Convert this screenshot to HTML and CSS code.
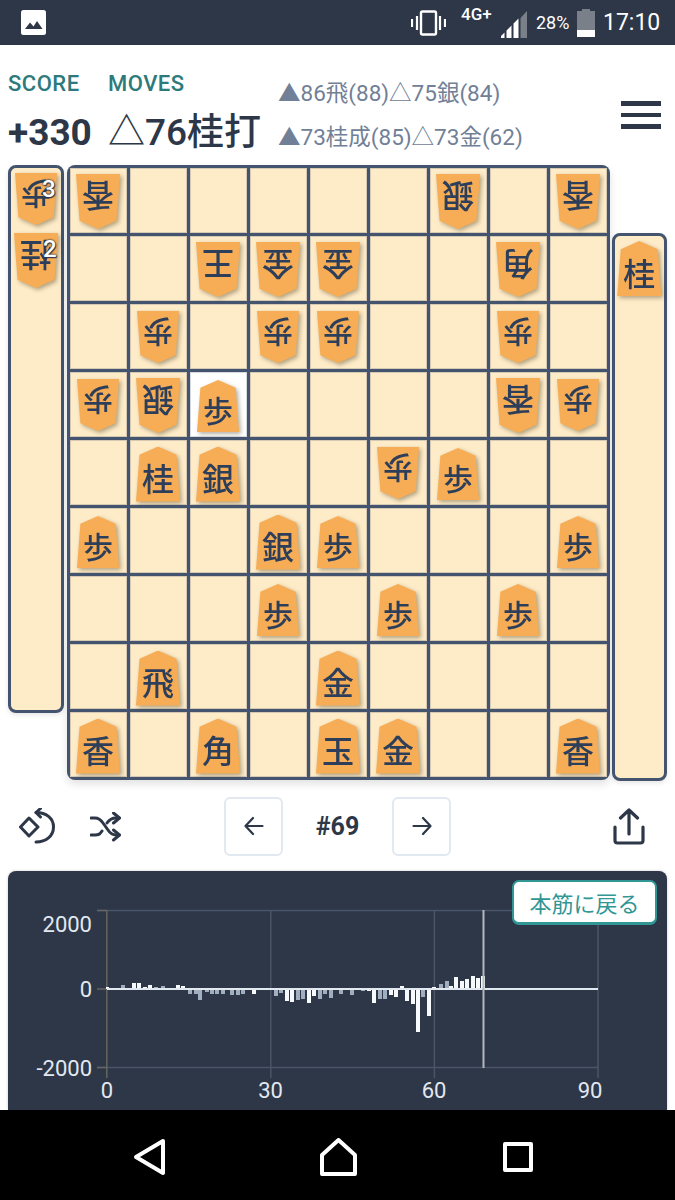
FILE: index.html
```html
<!DOCTYPE html>
<html lang="ja">
<head>
<meta charset="utf-8">
<title>Shogi</title>
<link rel="stylesheet" href="styles.css">
</head>
<body>
<div class="screen">
  <div class="status">
    <svg class="st-img" width="25" height="25" viewBox="0 0 25 25"><rect width="25" height="25" rx="2.5" fill="#fff"/><path d="M4 19 9 12.5l3.5 4L16 11l5.5 8z" fill="#2d3748"/></svg>
    <svg class="st-vib" width="35" height="26" viewBox="0 0 35 26"><rect x="10" y="1.5" width="15" height="23" rx="1.5" fill="none" stroke="#fff" stroke-width="2.4"/><path d="M6 6v14M1 9v8M29 6v14M34 9v8" stroke="#fff" stroke-width="2.2"/></svg>
    <span class="st-net">4G+</span>
    <svg class="st-sig" width="26" height="27" viewBox="0 0 26 27"><path d="M19.500 7 26 0V27H19.500z" fill="#7a808a"/><path d="M0 27V25L3.500 21.500V27zM5.500 27V19.500L10.500 14.500V27zM12.500 27V12.500L17.500 7.500V27z" fill="#fff"/></svg>
    <span class="st-pct">28%</span>
    <svg class="st-bat" width="18" height="28" viewBox="0 0 18 28"><path d="M5 0h8v2h5v26H0V2h5z" fill="#7a808a"/><rect y="21" width="18" height="7" fill="#fff"/></svg>
    <span class="st-time">17:10</span>
  </div>

  <header class="head">
    <div class="summary">
      <span class="label">SCORE</span>
      <span class="label">MOVES</span>
      <span class="score">+330</span>
      <span class="move">△76桂打</span>
    </div>
    <div class="lines">
      <div class="line">▲86飛(88)△75銀(84)</div>
      <div class="line">▲73桂成(85)△73金(62)</div>
    </div>
    <div class="burger"><i></i><i></i><i></i></div>
  </header>

  <div class="play">
    <div class="hand">
      <div class="held"><div class="piece"><span class="face small flip">歩</span></div><span class="count">3</span></div>
      <div class="held"><div class="piece"><span class="face flip">桂</span></div><span class="count">2</span></div>
    </div>
    <div class="board">
      <div class="cell"><div class="piece"><span class="face flip">香</span></div></div>
      <div class="cell"></div>
      <div class="cell"></div>
      <div class="cell"></div>
      <div class="cell"></div>
      <div class="cell"></div>
      <div class="cell"><div class="piece"><span class="face flip">銀</span></div></div>
      <div class="cell"></div>
      <div class="cell"><div class="piece"><span class="face flip">香</span></div></div>

      <div class="cell"></div>
      <div class="cell"></div>
      <div class="cell"><div class="piece"><span class="face flip">王</span></div></div>
      <div class="cell"><div class="piece"><span class="face flip">金</span></div></div>
      <div class="cell"><div class="piece"><span class="face flip">金</span></div></div>
      <div class="cell"></div>
      <div class="cell"></div>
      <div class="cell"><div class="piece"><span class="face flip">角</span></div></div>
      <div class="cell"></div>

      <div class="cell"></div>
      <div class="cell"><div class="piece"><span class="face small flip">歩</span></div></div>
      <div class="cell"></div>
      <div class="cell"><div class="piece"><span class="face small flip">歩</span></div></div>
      <div class="cell"><div class="piece"><span class="face small flip">歩</span></div></div>
      <div class="cell"></div>
      <div class="cell"></div>
      <div class="cell"><div class="piece"><span class="face small flip">歩</span></div></div>
      <div class="cell"></div>

      <div class="cell"><div class="piece"><span class="face small flip">歩</span></div></div>
      <div class="cell"><div class="piece"><span class="face flip">銀</span></div></div>
      <div class="cell last"><div class="piece"><span class="face small">歩</span></div></div>
      <div class="cell"></div>
      <div class="cell"></div>
      <div class="cell"></div>
      <div class="cell"></div>
      <div class="cell"><div class="piece"><span class="face flip">香</span></div></div>
      <div class="cell"><div class="piece"><span class="face small flip">歩</span></div></div>

      <div class="cell"></div>
      <div class="cell"><div class="piece"><span class="face">桂</span></div></div>
      <div class="cell"><div class="piece"><span class="face">銀</span></div></div>
      <div class="cell"></div>
      <div class="cell"></div>
      <div class="cell"><div class="piece"><span class="face small flip">歩</span></div></div>
      <div class="cell"><div class="piece"><span class="face small">歩</span></div></div>
      <div class="cell"></div>
      <div class="cell"></div>

      <div class="cell"><div class="piece"><span class="face small">歩</span></div></div>
      <div class="cell"></div>
      <div class="cell"></div>
      <div class="cell"><div class="piece"><span class="face">銀</span></div></div>
      <div class="cell"><div class="piece"><span class="face small">歩</span></div></div>
      <div class="cell"></div>
      <div class="cell"></div>
      <div class="cell"></div>
      <div class="cell"><div class="piece"><span class="face small">歩</span></div></div>

      <div class="cell"></div>
      <div class="cell"></div>
      <div class="cell"></div>
      <div class="cell"><div class="piece"><span class="face small">歩</span></div></div>
      <div class="cell"></div>
      <div class="cell"><div class="piece"><span class="face small">歩</span></div></div>
      <div class="cell"></div>
      <div class="cell"><div class="piece"><span class="face small">歩</span></div></div>
      <div class="cell"></div>

      <div class="cell"></div>
      <div class="cell"><div class="piece"><span class="face">飛</span></div></div>
      <div class="cell"></div>
      <div class="cell"></div>
      <div class="cell"><div class="piece"><span class="face">金</span></div></div>
      <div class="cell"></div>
      <div class="cell"></div>
      <div class="cell"></div>
      <div class="cell"></div>

      <div class="cell"><div class="piece"><span class="face">香</span></div></div>
      <div class="cell"></div>
      <div class="cell"><div class="piece"><span class="face">角</span></div></div>
      <div class="cell"></div>
      <div class="cell"><div class="piece"><span class="face">玉</span></div></div>
      <div class="cell"><div class="piece"><span class="face">金</span></div></div>
      <div class="cell"></div>
      <div class="cell"></div>
      <div class="cell"><div class="piece"><span class="face">香</span></div></div>
    </div>
    <div class="hand hand-right">
      <div class="held"><div class="piece"><span class="face">桂</span></div></div>
    </div>
  </div>

  <div class="controls">
    <svg class="ic-rotate" width="36" height="36" viewBox="0 0 36 36" fill="none" stroke="#2d3748" stroke-width="3" stroke-linecap="round" stroke-linejoin="round"><path d="M10 10 19 19 10 28 1.500 19z"/><path d="M17 4.500C27 4.500 34.500 10 34.500 19S27 34 17 34"/><path d="M21.500 0.500 17 4.500 21.500 9"/></svg>
    <svg class="ic-shuffle" width="31" height="30" viewBox="0 0 31 30" fill="none" stroke="#2d3748" stroke-width="3" stroke-linecap="round" stroke-linejoin="round"><path d="M1 6h4c4 0 6 2 8 5l5 7c2 3 4 5 8 5h3"/><path d="M1 23h4c4 0 5-1 7-4M17 11c2-3 4-5 9-5h3"/><path d="M23.500 1l6 5-6 5M23.500 18l6 5-6 5"/></svg>
    <button class="step step-prev"><svg width="20" height="20" viewBox="0 0 20 20" fill="none" stroke="#2d3748" stroke-width="2.200" stroke-linecap="round" stroke-linejoin="round"><path d="M18.500 10H1.500M9 2 1.500 10 9 18"/></svg></button>
    <span class="ply">#69</span>
    <button class="step"><svg width="20" height="20" viewBox="0 0 20 20" fill="none" stroke="#2d3748" stroke-width="2.200" stroke-linecap="round" stroke-linejoin="round"><path d="M1.500 10H18.500M11 2 18.500 10 11 18"/></svg></button>
    <svg class="ic-share" width="32" height="37" viewBox="0 0 32 37" fill="none" stroke="#2d3748" stroke-width="3.200" stroke-linecap="round" stroke-linejoin="round"><path d="M16 2V26M7.500 10 16 2 24.500 10"/><path d="M2 19V32.500A2.500 2.500 0 0 0 4.500 35H27.500A2.500 2.500 0 0 0 30 32.500V19"/></svg>
  </div>

  <section class="chart">
    <svg class="plot" width="659" height="239" viewBox="8 871 659 239">
      <g class="grid">
        <path d="M97 910.500H598M97 1067.500H598M270.800 910V1078M434.400 910V1078M598 910V1078"/>
      </g>
      <path class="axis" d="M106.800 910V1078M97 910.500H106.800M97 989H106.800M97 1067.500H106.800"/>
      <g class="gray">
        <rect x="121" y="985" width="4" height="4"/><rect x="154" y="987" width="4" height="2"/><rect x="161" y="986" width="4" height="3"/>
        <rect x="172" y="988" width="4" height="1"/><rect x="188" y="989" width="4" height="5"/><rect x="194" y="989" width="4" height="5"/>
        <rect x="198" y="989" width="4" height="11"/><rect x="205" y="989" width="4" height="3"/><rect x="210" y="989" width="4" height="5"/>
        <rect x="215" y="989" width="4" height="5"/><rect x="221" y="989" width="4" height="5"/><rect x="230" y="989" width="4" height="6"/>
        <rect x="236" y="989" width="4" height="6"/><rect x="241" y="989" width="4" height="5"/><rect x="258" y="989" width="4" height="1"/>
        <rect x="274" y="989" width="4" height="7"/><rect x="279" y="989" width="4" height="4"/><rect x="296" y="989" width="4" height="11"/>
        <rect x="301" y="989" width="4" height="10"/><rect x="318" y="989" width="4" height="10"/><rect x="323" y="989" width="4" height="5"/>
        <rect x="329" y="989" width="4" height="9"/><rect x="339" y="989" width="4" height="5"/><rect x="350" y="989" width="4" height="6"/>
        <rect x="361" y="989" width="4" height="2"/><rect x="378" y="989" width="4" height="10"/><rect x="383" y="989" width="4" height="10"/>
        <rect x="421" y="989" width="4" height="8"/><rect x="439" y="984" width="4" height="5"/><rect x="445" y="981" width="4" height="8"/>
      </g>
      <g class="white">
        <rect x="106" y="987" width="3" height="2"/><rect x="132" y="983" width="4" height="6"/>
        <rect x="137" y="983" width="4" height="6"/><rect x="143" y="987" width="4" height="2"/><rect x="148" y="985" width="4" height="4"/>
        <rect x="176" y="985" width="4" height="4"/><rect x="181" y="986" width="4" height="3"/><rect x="252" y="989" width="4" height="5"/>
        <rect x="285" y="989" width="4" height="12"/><rect x="290" y="989" width="4" height="13"/><rect x="307" y="989" width="4" height="14"/>
        <rect x="312" y="989" width="4" height="7"/><rect x="367" y="989" width="4" height="2"/><rect x="372" y="989" width="4" height="14"/>
        <rect x="389" y="989" width="4" height="6"/><rect x="394" y="989" width="4" height="8"/><rect x="400" y="986" width="4" height="3"/>
        <rect x="405" y="989" width="4" height="12"/><rect x="411" y="989" width="4" height="15"/><rect x="416" y="989" width="4" height="43"/>
        <rect x="427" y="989" width="4" height="27"/><rect x="432" y="987" width="4" height="2"/><rect x="449" y="986" width="4" height="3"/>
        <rect x="454" y="977" width="4" height="12"/><rect x="460" y="981" width="4" height="8"/><rect x="465" y="979" width="4" height="10"/>
        <rect x="471" y="976" width="4" height="13"/><rect x="476" y="978" width="4" height="11"/><rect x="481" y="976" width="4" height="13"/>
      </g>
      <path class="zero" d="M107 989H598"/>
      <path class="cursor" d="M483.500 910V1068"/>
      <g class="ticks">
        <text class="end" x="92" y="932">2000</text>
        <text class="end" x="92" y="997">0</text>
        <text class="end" x="92" y="1076">-2000</text>
        <text class="mid" x="107" y="1098">0</text>
        <text class="mid" x="270.500" y="1098">30</text>
        <text class="mid" x="434" y="1098">60</text>
        <text class="mid" x="590" y="1098">90</text>
      </g>
    </svg>
    <button class="back">本筋に戻る</button>
  </section>

  <nav class="softkeys">
    <svg width="34" height="38" viewBox="0 0 34 38" fill="none" stroke="#fff" stroke-width="4" stroke-linejoin="round"><path d="M30 3 3 19 30 35z"/></svg>
    <svg width="37" height="38" viewBox="0 0 37 38" fill="none" stroke="#fff" stroke-width="4" stroke-linejoin="round"><path d="M2 17 18.500 2 35 17V36H2z"/></svg>
    <svg width="30" height="30" viewBox="0 0 30 30" fill="none" stroke="#fff" stroke-width="4" stroke-linejoin="round"><rect x="2" y="2" width="26" height="26"/></svg>
  </nav>
</div>
</body>
</html>
```
FILE: styles.css
```css
* { box-sizing: border-box; }
html, body { margin: 0; padding: 0; background: #fff; }
body { font-family: Roboto, "Noto Sans CJK JP", sans-serif; color: #2d3748; }
.screen { width: 675px; height: 1200px; overflow: hidden; display: flex; flex-direction: column; }

.status { height: 45px; background: #2d3748; color: #fff; display: flex; align-items: center; flex: none; }
.st-img { margin-left: 21px; }
.st-vib { margin-left: 365px; }
.st-net { margin-left: 15px; width: 32px; font-size: 17px; font-weight: 500; align-self: flex-start; margin-top: 5px; line-height: 18px; white-space: nowrap; }
.st-sig { margin-left: 8px; margin-top: 3px; }
.st-pct { margin-left: 9px; width: 36px; font-size: 18px; white-space: nowrap; }
.st-bat { margin-left: 5px; }
.st-time { margin-left: 8px; font-size: 23px; }

.head { height: 120px; flex: none; display: flex; padding-left: 8px; }
.summary { width: 270px; display: grid; grid-template-columns: 100px auto; grid-template-rows: 26px 44px; padding-top: 26px; }
.label { font-size: 22px; font-weight: 500; letter-spacing: .5px; color: #2c7a7b; line-height: 26px; }
.score { font-size: 37px; font-weight: 700; line-height: 44px; margin-top: 14px; }
.move { font-size: 37px; font-weight: 500; line-height: 44px; margin-top: 14px; white-space: nowrap; }
.lines { width: 335px; padding-top: 27px; }
.line { font-size: 22.5px; line-height: 43.500px; color: #718096; white-space: nowrap; }
.burger { width: 40px; margin-left: 8px; padding-top: 56px; display: flex; flex-direction: column; gap: 7px; }
.burger i { display: block; height: 4.500px; background: #2d3748; }

.play { display: flex; flex: none; padding-left: 8px; height: 616px; }
.hand { width: 55.500px; height: 548px; background: #feebc8; border: 3px solid #44546e; border-radius: 8px; display: flex; flex-direction: column; align-items: center; padding-top: 5px; gap: 8px; box-shadow: 0 2px 5px rgba(0,0,0,.1); }
.hand-right { margin-top: 68px; margin-left: 2px; }
.held { position: relative; }
.count { position: absolute; font-size: 24px; font-weight: 500; line-height: 24px; right: 1px; top: 4px; color: #fff; text-shadow: 0 0 2px #2d3748, 0 0 2px #2d3748, 1px 1px 1px #2d3748; }
.board { margin-left: 3px; width: 543px; height: 615px; padding: 3px; display: grid; grid-template-columns: repeat(9, 57px); grid-template-rows: repeat(9, 65px); gap: 3px; background: #44546e; border-radius: 8px; box-shadow: 0 4px 8px rgba(0,0,0,.12); }
.cell { background: #feebc8; display: flex; align-items: center; justify-content: center; padding-top: 3px; box-shadow: inset 0 0 0 1px rgba(68,84,110,.22); }
.last { background: #fff; }
.piece { filter: drop-shadow(2px 2px 2px rgba(60,50,20,.4)); }
.face { display: flex; align-items: center; justify-content: center; width: 44px; height: 55px; padding-top: 6px; background: #f6ad55; color: #2c3e5a; font-family: "Noto Sans CJK JP", sans-serif; font-size: 32px; font-weight: 500; line-height: 1; clip-path: polygon(50% 0, 92% 15%, 100% 100%, 0 100%, 8% 15%); }
.small { width: 42px; height: 52px; font-size: 30px; }
.flip { transform: rotate(180deg); }
.cell .flip { transform: translateY(-1px) rotate(180deg); }

.controls { height: 90px; flex: none; display: flex; align-items: center; padding-left: 19px; }
.ic-shuffle { margin-left: 35px; margin-top: 2px; }
.step { width: 59px; height: 59px; padding: 0; background: #fff; border: 2px solid #e2e8f0; border-radius: 6px; display: flex; align-items: center; justify-content: center; }
.step-prev { margin-left: 103px; }
.ply { width: 109px; text-align: center; font-size: 25px; font-weight: 700; }
.ic-share { margin-left: 162px; }

.chart { position: relative; margin: 0 8px; height: 239px; flex: none; background: #2d3748; border-radius: 8px 8px 0 0; box-shadow: 0 0 3px rgba(0,0,0,.2); }
.plot { display: block; }
.grid path { fill: none; stroke: #4a5568; stroke-width: 1.500; }
.axis { fill: none; stroke: #66665f; stroke-width: 1.500; }
.gray rect { fill: #a0aec0; }
.white rect { fill: #f7fafc; }
.zero { stroke: #e2e8f0; stroke-width: 2; }
.cursor { stroke: #b5b8bc; stroke-width: 2; }
.ticks text { fill: #e2e8f0; font-family: Roboto, sans-serif; font-size: 22px; }
.end { text-anchor: end; }
.mid { text-anchor: middle; }
.back { position: absolute; top: 9px; right: 10px; width: 145px; height: 45px; background: #fff; color: #319795; border: 2px solid #319795; border-bottom-width: 3px; border-radius: 7px; padding: 0; font-family: "Noto Sans CJK JP", sans-serif; font-size: 22px; line-height: 1; }

.softkeys { height: 90px; flex: none; background: #000; display: grid; grid-template-columns: 187px 183px 30px; align-items: center; padding: 4px 0 0 133px; }
.softkeys svg { display: block; }
```
